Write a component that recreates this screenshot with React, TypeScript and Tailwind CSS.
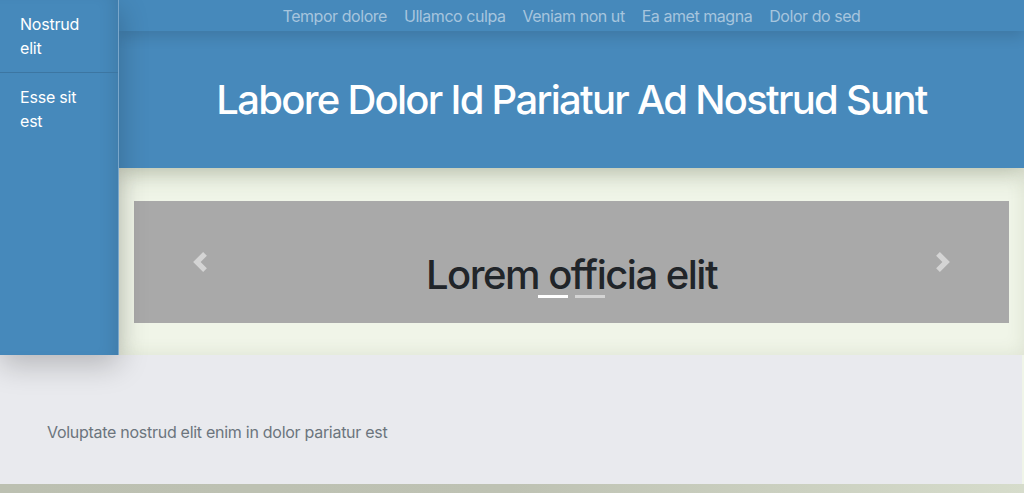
const navLinks = ["Tempor dolore", "Ullamco culpa", "Veniam non ut", "Ea amet magna", "Dolor do sed"]
const sideLinks = ["Nostrud elit", "Esse sit est"]

function Chevron({ dir }: { dir: "left" | "right" }) {
  // bootstrap-like chunky chevron
  return (
    <svg viewBox="0 0 8 8" className="w-[20px] h-[20px]" fill="#fff">
      {dir === "left" ? (
        <path d="M5.25 0l-4 4 4 4 1.5-1.5L4.25 4l2.5-2.5L5.25 0z" />
      ) : (
        <path d="M2.75 0l-1.5 1.5L3.75 4l-2.5 2.5L2.75 8l4-4-4-4z" />
      )}
    </svg>
  )
}

export default function App() {
  return (
    <div className="w-[1024px] h-[493px] overflow-hidden bg-[#f0f5e8] font-['Inter',sans-serif]">
      <div className="flex h-[355px]">
        {/* Sidebar */}
        <aside className="relative z-30 w-[119px] shrink-0 bg-[#4689bb] border-r border-[#7aa7cb] shadow-[0_10px_28px_rgba(0,0,0,0.22),inset_-14px_0_18px_-12px_rgba(0,0,0,0.12)]">
          {sideLinks.map((label, i) => (
            <div
              key={label}
              className={`px-5 py-3 text-white text-base leading-6 tracking-[-0.2px] ${i === 0 ? "border-b border-[#3c76a2]" : ""}`}
            >
              {label}
            </div>
          ))}
        </aside>

        <div className="flex-1 flex flex-col min-w-0">
          {/* Top nav */}
          <nav className="relative z-20 h-[31px] bg-[#4689bb] flex items-center justify-center gap-[17px] shadow-[0_6px_14px_rgba(0,0,0,0.12)]">
            {navLinks.map((l) => (
              <span key={l} className="text-[#a6c5de] text-base leading-6 tracking-[-0.45px]">
                {l}
              </span>
            ))}
          </nav>

          {/* Header */}
          <header className="relative z-10 h-[137px] bg-[#4789bb] flex items-center justify-center shadow-[0_6px_22px_rgba(60,70,40,0.25)]">
            <h1 className="text-white text-[40px] font-medium leading-none tracking-[-1.72px]">
              Labore Dolor Id Pariatur Ad Nostrud Sunt
            </h1>
          </header>

          {/* Carousel section */}
          <section className="flex-1 px-[15px] pt-[33px] pb-[32px] shadow-[inset_0_0_18px_rgba(80,90,50,0.12)]">
            <div className="relative h-[122px] bg-[#a9a9a9] flex">
              <button className="w-[15%] flex items-center justify-center opacity-50">
                <Chevron dir="left" />
              </button>
              <div className="flex-1 flex items-center justify-center pt-[26px]">
                <h2 className="text-[#212529] text-[40px] font-medium leading-[48px] tracking-[-1.5px]">Lorem officia elit</h2>
              </div>
              <button className="w-[15%] flex items-center justify-center opacity-50">
                <Chevron dir="right" />
              </button>
              <div className="absolute left-0 right-0 bottom-[25px] flex justify-center gap-[7px]">
                <span className="w-[30px] h-[3px] bg-white" />
                <span className="w-[30px] h-[3px] bg-white/50" />
              </div>
            </div>
          </section>
        </div>
      </div>

      {/* Footer */}
      <footer className="relative z-0 h-[129px] mr-[2px] bg-[#e9eaee] px-[47px] pt-[65px]">
        <p className="text-[#6c757d] text-base leading-6 tracking-[-0.28px]">Voluptate nostrud elit enim in dolor pariatur est</p>
      </footer>
      <div className="h-[9px] bg-gradient-to-r from-[#bcc0b1] via-[#bec2b3] to-[#d6dccb]" />
    </div>
  )
}
